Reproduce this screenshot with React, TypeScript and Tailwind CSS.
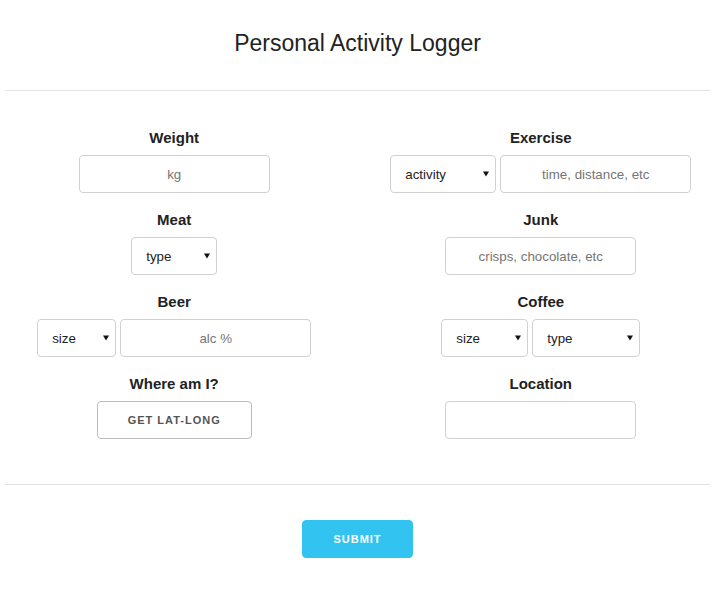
import React from "react";

const font = { fontFamily: '"Liberation Sans", Arial, sans-serif' };

function Label({ children }: { children: React.ReactNode }) {
  return (
    <div className="text-[15px] leading-[24px] font-bold text-[#222] mb-[5px]">{children}</div>
  );
}

function TextInput({ placeholder, w = "w-[191px]" }: { placeholder?: string; w?: string }) {
  return (
    <input
      type="text"
      placeholder={placeholder}
      className={`${w} h-[38px] border border-[#D1D1D1] rounded-[4px] px-[10px] text-center text-[13.333px] text-[#222] placeholder:text-[#757575] bg-white outline-none`}
      style={font}
    />
  );
}

function Select({ label, w }: { label: string; w: string }) {
  return (
    <div className={`relative ${w} h-[38px]`}>
      <select
        className="appearance-none w-full h-full border border-[#D1D1D1] rounded-[4px] pl-[14px] pr-[20px] pt-[2px] text-[13.333px] text-[#222] bg-white outline-none"
        style={font}
        defaultValue=""
      >
        <option value="">{label}</option>
      </select>
      <svg
        className="absolute right-[7px] top-[16px] pointer-events-none"
        width="6"
        height="6"
        viewBox="0 0 6 6"
      >
        <polygon points="0,0.5 6,0.5 3,5.5" fill="#111" />
      </svg>
    </div>
  );
}

function Field({ label, children }: { label: string; children: React.ReactNode }) {
  return (
    <div className="flex flex-col items-center mb-[15px]">
      <Label>{label}</Label>
      <div className="flex gap-[4px] h-[38px]">{children}</div>
    </div>
  );
}

export default function App() {
  return (
    <div className="bg-white min-h-[593px] w-full" style={font}>
      <div className="ml-[5px] w-[705px]">
        <div className="h-[60px] pt-[29px]">
          <h1 className="text-center text-[23px] leading-[28px] font-normal text-[#222]">
            Personal Activity Logger
          </h1>
        </div>
        <div className="mt-[30px] mb-[35px] border-t border-[#E1E1E1]" />
        <div className="grid grid-cols-[48%_48%] gap-x-[4%]">
          <div>
            <Field label="Weight">
              <TextInput placeholder="kg" />
            </Field>
            <Field label="Meat">
              <Select label="type" w="w-[86px]" />
            </Field>
            <Field label="Beer">
              <Select label="size" w="w-[79px]" />
              <TextInput placeholder="alc %" />
            </Field>
            <Field label="Where am I?">
              <button
                className="w-[155px] h-[38px] border border-[#BBB] rounded-[4px] text-[11px] font-bold tracking-[1px] uppercase text-[#555] bg-transparent"
                style={font}
              >
                Get Lat-Long
              </button>
            </Field>
          </div>
          <div>
            <Field label="Exercise">
              <Select label="activity" w="w-[106px]" />
              <TextInput placeholder="time, distance, etc" />
            </Field>
            <Field label="Junk">
              <TextInput placeholder="crisps, chocolate, etc" />
            </Field>
            <Field label="Coffee">
              <Select label="size" w="w-[87px]" />
              <Select label="type" w="w-[108px]" />
            </Field>
            <Field label="Location">
              <TextInput />
            </Field>
          </div>
        </div>
        <div className="mt-[30px] mb-[35px] border-t border-[#E1E1E1]" />
        <div className="flex justify-center">
          <button
            className="w-[111px] h-[38px] rounded-[4px] bg-[#33C3F0] border border-[#33C3F0] text-white text-[11px] font-bold tracking-[1px] uppercase"
            style={font}
          >
            Submit
          </button>
        </div>
      </div>
    </div>
  );
}
